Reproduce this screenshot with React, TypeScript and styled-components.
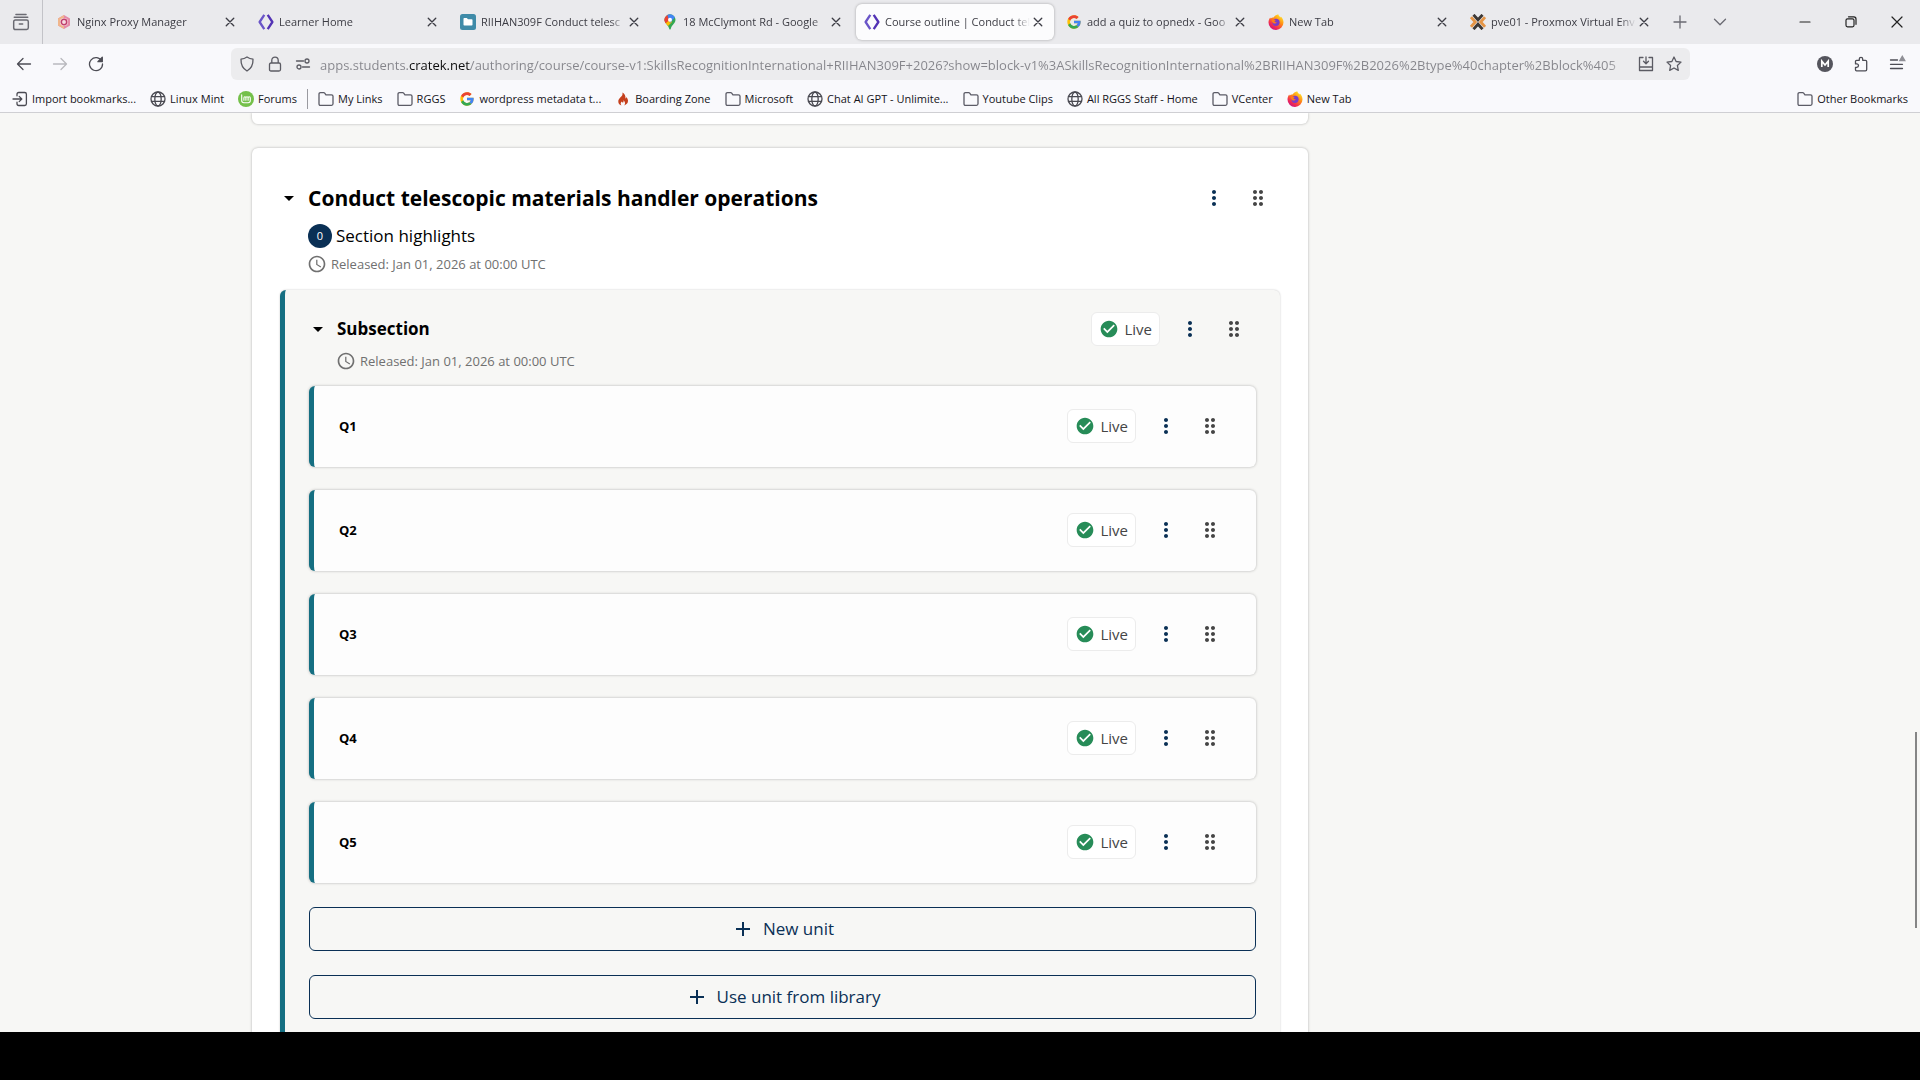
import React from "react";
import styled, { createGlobalStyle } from "styled-components";
import {
  MdArrowDropDown,
  MdMoreVert,
  MdDragIndicator,
  MdCheckCircle,
  MdAccessTime,
  MdAdd,
} from "react-icons/md";

const GlobalStyle = createGlobalStyle`
  *, *::before, *::after { box-sizing: border-box; }
  html, body { margin: 0; padding: 0; }
  body {
    font-family: "Open Sans", "Noto Sans", sans-serif;
    background: #000;
    color: #000;
  }
  button, input { font: inherit; color: inherit; }
  h2, h3, h4, p, ul { margin: 0; padding: 0; }
  ul { list-style: none; }
`;

const navy = "#0a3055";
const teal = "#156f82";

/* ---------- window ---------- */

const Window = styled.div`
  display: flex;
  flex-direction: column;
  height: 100vh;
  padding-bottom: 48px;
  overflow: hidden;
`;

const PlainButton = styled.button`
  display: inline-flex;
  align-items: center;
  justify-content: center;
  flex: none;
  padding: 0;
  border: 0;
  background: none;
  cursor: pointer;
`;

/* ---------- tab strip ---------- */

const TabStrip = styled.header`
  display: flex;
  align-items: center;
  flex: none;
  height: 44px;
  background: #eaeaed;
`;

const ViewButton = styled(PlainButton)`
  width: 43px;
  height: 44px;
  border-right: 1px solid #c3c3c8;
  color: #6a6a72;
`;

const Tabs = styled.div`
  display: flex;
  gap: 4px;
  flex: 0 1 1617px;
  min-width: 0;
  padding-left: 5px;
`;

const TabItem = styled.div<{ $active?: boolean }>`
  display: flex;
  align-items: center;
  flex: 1 1 0;
  min-width: 0;
  height: 36px;
  padding: 0 8px;
  border-radius: 6px;
  background: ${(p) => (p.$active ? "#fcfcfd" : "transparent")};
  box-shadow: ${(p) => (p.$active ? "0 0 3px rgba(0, 0, 0, 0.3)" : "none")};
`;

const TabLabel = styled.button`
  display: flex;
  align-items: center;
  gap: 5px;
  flex: 1;
  min-width: 0;
  padding: 0;
  border: 0;
  background: none;
  font-size: 11px;
  line-height: 16px;
  color: #3c3c44;
  text-align: left;
  cursor: pointer;

  svg { flex: none; }
`;

const TabTitle = styled.span`
  flex: 1;
  overflow: hidden;
  white-space: nowrap;
  mask-image: linear-gradient(to left, transparent, #000 16px);
`;

const TabClose = styled(PlainButton)`
  width: 16px;
  height: 24px;
  color: #3c3c44;
`;

const StripButton = styled(PlainButton)`
  width: 40px;
  height: 36px;
  color: #6a6a72;
`;

const WindowControls = styled.div`
  display: flex;
  margin-left: auto;
`;

const WindowButton = styled(PlainButton)`
  width: 46px;
  height: 36px;
  color: #222;
`;

/* ---------- navigation ---------- */

const NavBar = styled.nav`
  display: flex;
  align-items: center;
  flex: none;
  height: 40px;
  padding: 0 5px 0 6px;
  background: #f9f9fc;
`;

const NavButton = styled(PlainButton)<{ $muted?: boolean }>`
  width: 36px;
  height: 36px;
  color: ${(p) => (p.$muted ? "#b9b9be" : "#4d4d55")};
`;

const AddressBar = styled.form`
  display: flex;
  align-items: center;
  flex: 1;
  min-width: 0;
  height: 32px;
  margin: 0 117px;
  padding: 0 2px;
  border-radius: 6px;
  background: #ececee;
`;

const AddressButton = styled(PlainButton)`
  width: 28px;
  height: 28px;
  color: #5b5b63;
`;

const AddressInput = styled.input`
  flex: 1;
  min-width: 0;
  height: 28px;
  padding: 2px 0 0 3px;
  border: 0;
  outline: 0;
  font-size: 13px;
  color: transparent;
  background-image: linear-gradient(
    to right,
    #85858b 0,
    #85858b 92px,
    #0c0c0d 92px,
    #0c0c0d 153px,
    #85858b 153px,
    #85858b calc(100% - 24px),
    transparent 100%
  );
  background-clip: text;
  -webkit-background-clip: text;
`;

/* ---------- bookmarks ---------- */

const BookmarkBar = styled.div`
  display: flex;
  align-items: center;
  flex: none;
  gap: 14px;
  height: 29px;
  padding: 1px 12px 0;
  border-bottom: 1px solid #cfcfd3;
  background: #f9f9fc;
`;

const Bookmark = styled.a<{ $end?: boolean }>`
  display: flex;
  align-items: center;
  gap: 4px;
  flex: none;
  margin-left: ${(p) => (p.$end ? "auto" : "0")};
  font-size: 11px;
  line-height: 16px;
  color: #15141a;
  text-decoration: none;
  white-space: nowrap;
`;

const BookmarkDivider = styled.span`
  width: 1px;
  height: 20px;
  margin: 0 -4px;
  background: #9a9aa0;
`;

/* ---------- page ---------- */

const Viewport = styled.div`
  position: relative;
  flex: 1;
  min-height: 0;
  overflow: hidden;
  background: #f7f7f5;
`;

const Outline = styled.main`
  display: flex;
  flex-direction: column;
  gap: 24px;
  max-width: 1308px;
  padding-left: 252px;
`;

const Scrollbar = styled.div`
  position: absolute;
  top: 619px;
  right: 3px;
  width: 2px;
  height: 196px;
  background: #858585;
`;

const cardShadow = "0 0 3px rgba(0, 0, 0, 0.28)";

const PreviousSection = styled.section`
  height: 11px;
  border-radius: 0 0 6px 6px;
  background: #fff;
  box-shadow: ${cardShadow};
`;

const Section = styled.section`
  padding: 28px;
  border-radius: 6px;
  background: #fff;
  box-shadow: ${cardShadow};
`;

const Subsection = styled.section`
  margin-top: 16px;
  padding: 17px 24px 24px;
  border-left: 5px solid ${teal};
  border-radius: 6px;
  background: #f7f7f5;
  box-shadow: 0 0 2px rgba(0, 0, 0, 0.24);
`;

const HeaderRow = styled.div`
  display: flex;
  align-items: center;
  height: 44px;
`;

const ExpandButton = styled(PlainButton)<{ $size: "section" | "subsection" }>`
  gap: 7px;
  margin-left: -3px;
  font-size: ${(p) => (p.$size === "section" ? 21 : 17)}px;
  line-height: 28px;

  h2, h3 { font-size: inherit; font-weight: 700; }
`;

const Actions = styled.div`
  display: flex;
  align-items: center;
  margin-left: auto;
`;

const IconButton = styled(PlainButton)<{ $grip?: boolean }>`
  width: 44px;
  height: 44px;
  font-size: 24px;
  color: ${(p) => (p.$grip ? "#454545" : navy)};
`;

const StatusBadge = styled.span`
  display: flex;
  align-items: center;
  gap: 5px;
  height: 34px;
  margin-right: 8px;
  padding: 0 7px;
  border: 1px solid #ececec;
  border-radius: 6px;
  background: #fff;
  font-size: 15px;
  line-height: 24px;
  color: #454545;

  svg { font-size: 20px; color: #278c58; }
`;

const Highlights = styled(PlainButton)`
  display: flex;
  gap: 4px;
  height: 24px;
  margin: 4px 0 0 28px;
  font-size: 17px;
  line-height: 24px;
`;

const Count = styled.span`
  width: 24px;
  height: 24px;
  border-radius: 50%;
  background: ${navy};
  color: #fff;
  font-size: 11px;
  line-height: 24px;
  text-align: center;
`;

const Release = styled.p`
  display: flex;
  align-items: center;
  gap: 4px;
  height: 20px;
  margin-left: 27px;
  font-size: 13px;
  line-height: 20px;
  color: #707070;

  svg { font-size: 20px; }
`;

const SectionMeta = styled.div`
  display: grid;
  gap: 6px;
  justify-items: start;
`;

const UnitList = styled.ul`
  display: grid;
  gap: 23px;
  margin: 15px 0 24px;
`;

const Unit = styled.li`
  display: flex;
  align-items: center;
  height: 81px;
  padding: 0 24px 2px 25px;
  border-left: 5px solid ${teal};
  border-radius: 6px;
  background: #fdfdfd;
  box-shadow: ${cardShadow};
`;

const UnitTitle = styled.h4`
  font-size: 13px;
  font-weight: 700;
  line-height: 20px;
`;

const AddButtons = styled.div`
  display: grid;
  gap: 24px;
`;

const AddButton = styled(PlainButton)`
  gap: 8px;
  height: 44px;
  border: 1px solid ${navy};
  border-radius: 6px;
  font-size: 17px;
  line-height: 24px;
  color: ${navy};

  svg { font-size: 24px; }
`;

/* ---------- icons ---------- */

const Line = ({
  size = 16,
  children,
  width = 1.3,
}: {
  size?: number;
  width?: number;
  children: React.ReactNode;
}) => (
  <svg
    width={size}
    height={size}
    viewBox="0 0 16 16"
    fill="none"
    stroke="currentColor"
    strokeWidth={width}
    strokeLinecap="round"
    strokeLinejoin="round"
    aria-hidden="true"
  >
    {children}
  </svg>
);

const FolderIcon = () => (
  <Line>
    <path d="M1 12.8V3.2q0-1.5 1.5-1.5h3.2q.6 0 1 .5l1.2 1.6h5.6q1.5 0 1.5 1.5v7.5q0 1.5-1.5 1.5h-11Q1 14.3 1 12.8z" stroke="#5b5b66" />
  </Line>
);

const GlobeIcon = () => (
  <Line>
    <g stroke="#4a4a52">
      <circle cx="8" cy="8" r="7" />
      <ellipse cx="8" cy="8" rx="3.2" ry="7" />
      <path d="M1.5 5.6h13M1.5 10.4h13" />
    </g>
  </Line>
);

const ImportIcon = () => (
  <Line>
    <path d="M5 4.8V3.2q0-1.7 1.7-1.7h6q1.7 0 1.7 1.7v9.6q0 1.7-1.7 1.7h-6Q5 14.5 5 12.8v-1.6M1 8h8.5M7.2 5.4 9.8 8l-2.6 2.6" stroke="#4a4a52" />
  </Line>
);

const GoogleIcon = () => (
  <svg width="16" height="16" viewBox="0 0 48 48" aria-hidden="true">
    <path fill="#FFC107" d="M43.6 20H24v8h11.300C33.700 32.700 29.200 36 24 36c-6.600 0-12-5.400-12-12s5.400-12 12-12c3.100 0 5.800 1.200 7.900 3l5.700-5.700C34 6 29.300 4 24 4 13 4 4 13 4 24s9 20 20 20 20-9 20-20c0-1.300-.1-2.700-.4-4z" />
    <path fill="#EA4335" d="m6.300 14.700 6.600 4.800C14.700 15.100 19 12 24 12c3.100 0 5.800 1.200 7.900 3l5.700-5.700C34 6 29.300 4 24 4 16.300 4 9.700 8.300 6.300 14.700z" />
    <path fill="#34A853" d="M24 44c5.200 0 9.900-2 13.400-5.200l-6.200-5.200A12 12 0 0 1 12.700 28l-6.500 5C9.500 39.600 16.200 44 24 44z" />
    <path fill="#4285F4" d="M43.600 20H24v8h11.300a12 12 0 0 1-4.100 5.600l6.200 5.200C37 39.200 44 34 44 24c0-1.300-.1-2.700-.4-4z" />
  </svg>
);

const FirefoxIcon = () => (
  <svg width="16" height="16" viewBox="0 0 16 16" aria-hidden="true">
    <defs>
      <linearGradient id="fx" x1="0.85" y1="0.1" x2="0.25" y2="0.95">
        <stop offset="0" stopColor="#ffe226" />
        <stop offset="0.4" stopColor="#ff8a16" />
        <stop offset="0.75" stopColor="#f3304e" />
        <stop offset="1" stopColor="#d1127c" />
      </linearGradient>
    </defs>
    <path fill="url(#fx)" d="M10.200.3c.4 1.600 1.500 2.300 2.300 3.200.3-.2.3-.6.300-.9 1.700 1.500 2.700 3.700 2.700 6A7.500 7.500 0 0 1 .5 8.400c0-2 .8-3.800 1.700-5 .1.500.3.800.5 1.100C3.500 3.600 4.600 3.300 5.500 3.500c1.300-1.900 3.300-2.800 4.700-3.200z" />
    <circle cx="8" cy="8.300" r="3.600" fill="#7a3cc9" />
    <path fill="#ff7a1a" d="M3.600 5.600c1.700-1 3.200-.2 4.400.9-.9 0-1.500.4-1.400 1 .2.700 1.200.8 2 .5-.4 1.300-1.600 1.900-2.800 1.500C4.300 9 3.500 7.500 3.600 5.600z" />
  </svg>
);

const MintIcon = () => (
  <svg width="16" height="16" viewBox="0 0 16 16" aria-hidden="true">
    <circle cx="8" cy="8" r="8" fill="#74c04a" />
    <path d="M3.700 3.800v5.700q0 2.200 2.200 2.200h4.200q2.200 0 2.200-2.200V7q0-1.300-1.100-1.300T10.100 7v2.200M10.100 9.200V7q0-1.300-1.100-1.300T7.900 7v2.200M7.900 7q0-1.300-1-1.300T5.900 7v2.200" fill="none" stroke="#fff" strokeWidth="1.100" strokeLinecap="round" />
  </svg>
);

const FlameIcon = () => (
  <svg width="16" height="16" viewBox="0 0 16 16" aria-hidden="true">
    <path fill="#c5401d" d="M7.400 1.500c.6 2.200-.5 3.300-1.700 4.600-1.500 1.600-2.900 3.200-2.300 5.300.5 1.700 1.700 2.600 3 3-1-1.300-.9-2.600.3-3.800.2.800.7 1.100 1.200 1 .9-.3.700-1.400.4-2.400 1.700 1.300 2.500 3.500.9 5.200 2.500-.6 4-2.500 3.800-4.800-.1-1.500-1-2.600-1.700-3.500 0 .8-.3 1.300-.9 1.500.5-2.600-.8-5-3-6.100z" />
  </svg>
);

const BracketsIcon = () => (
  <svg width="16" height="16" viewBox="0 0 16 16" fill="none" strokeWidth="2.300" strokeLinejoin="round" aria-hidden="true">
    <path d="M6.300.8 1.600 8l4.700 7.200" stroke="#6a55c8" />
    <path d="m9.700.8 4.700 7.200-4.700 7.200" stroke="#5333b5" />
  </svg>
);

const NginxIcon = () => (
  <svg width="16" height="16" viewBox="0 0 16 16" aria-hidden="true">
    <path d="M8 1 14 4.500v7L8 15l-6-3.500v-7z" fill="#e58aa8" />
    <path d="M8 1v14l-6-3.500v-7z" fill="#f0b68c" />
    <circle cx="8" cy="8" r="4" fill="#f7dbe2" />
    <circle cx="8" cy="8" r="2.700" fill="none" stroke="#c0406e" strokeWidth="1.500" />
  </svg>
);

const FolderTileIcon = () => (
  <svg width="16" height="16" viewBox="0 0 16 16" aria-hidden="true">
    <rect width="16" height="16" rx="2.500" fill="#3f8ba8" />
    <path fill="#fff" d="M3.500 4.800q0-.8.8-.8h2.500l1.200 1.300h3.700q.8 0 .8.800v4.700q0 .8-.8.800H4.300q-.8 0-.8-.8z" />
  </svg>
);

const MapPinIcon = () => (
  <svg width="16" height="16" viewBox="0 0 16 16" aria-hidden="true">
    <defs>
      <clipPath id="pin">
        <path d="M8 .3a5.500 5.500 0 0 1 5.500 5.500c0 3.700-4 5.200-4.700 9-.2 1.100-1.400 1.100-1.600 0-.7-3.800-4.700-5.300-4.700-9A5.500 5.500 0 0 1 8 .3z" />
      </clipPath>
    </defs>
    <g clipPath="url(#pin)">
      <path fill="#34a853" d="M0 0h16v16H0z" />
      <path fill="#fbbc04" d="m0 10 7-6 3 4-6 6z" />
      <path fill="#ea4335" d="M0 0h6l3 4-6 6H0z" />
      <path fill="#4285f4" d="M5 0h11L8 9z" />
      <path fill="#ea4335" d="M2 2.500 7.500 6 2.500 9.500 0 6z" />
    </g>
    <circle cx="8" cy="5.700" r="2" fill="#fff" />
  </svg>
);

const ProxmoxIcon = () => (
  <svg width="16" height="16" viewBox="0 0 16 16" fill="none" aria-hidden="true">
    <path d="M1 3.200 5.300 8 1 12.800M15 3.200 10.700 8l4.300 4.800" stroke="#e59546" strokeWidth="2.800" />
    <path d="m3.500.8 4.500 5 4.500-5M3.500 15.200l4.500-5 4.500 5" stroke="#3d3835" strokeWidth="2.800" />
  </svg>
);

/* ---------- content ---------- */

const tabs = [
  { title: "Nginx Proxy Manager", icon: <NginxIcon /> },
  { title: "Learner Home", icon: <BracketsIcon /> },
  { title: "RIIHAN309F Conduct telesc", icon: <FolderTileIcon /> },
  { title: "18 McClymont Rd - Google", icon: <MapPinIcon /> },
  { title: "Course outline | Conduct tel", icon: <BracketsIcon />, active: true },
  { title: "add a quiz to opnedx - Goo", icon: <GoogleIcon /> },
  { title: "New Tab", icon: <FirefoxIcon /> },
  { title: "pve01 - Proxmox Virtual Env", icon: <ProxmoxIcon /> },
];

const bookmarks = [
  { label: "My Links", icon: <FolderIcon /> },
  { label: "RGGS", icon: <FolderIcon /> },
  { label: "wordpress metadata t...", icon: <GoogleIcon /> },
  { label: "Boarding Zone", icon: <FlameIcon /> },
  { label: "Microsoft", icon: <FolderIcon /> },
  { label: "Chat AI GPT - Unlimite...", icon: <GlobeIcon /> },
  { label: "Youtube Clips", icon: <FolderIcon /> },
  { label: "All RGGS Staff - Home", icon: <GlobeIcon /> },
  { label: "VCenter", icon: <FolderIcon /> },
  { label: "New Tab", icon: <FirefoxIcon /> },
];

const units = ["Q1", "Q2", "Q3", "Q4", "Q5"];

const address =
  "apps.students.cratek.net/authoring/course/course-v1:SkillsRecognitionInternational+RIIHAN309F+2026?show=block-v1%3ASkillsRecognitionInternational%2BRIIHAN309F%2B2026%2Btype%40chapter%2Bblock%405";

const Live = () => (
  <StatusBadge>
    <MdCheckCircle />
    Live
  </StatusBadge>
);

const RowActions = ({ name, live }: { name: string; live?: boolean }) => (
  <Actions>
    {live && <Live />}
    <IconButton type="button" aria-label={`${name} menu`}>
      <MdMoreVert />
    </IconButton>
    <IconButton type="button" $grip aria-label={`Move ${name}`}>
      <MdDragIndicator />
    </IconButton>
  </Actions>
);

const Released = () => (
  <Release>
    <MdAccessTime />
    Released: Jan 01, 2026 at 00:00 UTC
  </Release>
);

const BrowserTabs = () => (
  <TabStrip>
    <ViewButton type="button" aria-label="Recent browsing">
      <Line size={18}>
        <path d="M3.500 1.300h9M2 3.800h12M3 6.300h10q1.500 0 1.500 1.500v5.400q0 1.500-1.500 1.500H3q-1.500 0-1.500-1.500V7.800Q1.500 6.300 3 6.300zM6.500 9.800h3" />
      </Line>
    </ViewButton>
    <Tabs role="tablist">
      {tabs.map((tab) => (
        <TabItem key={tab.title} $active={tab.active}>
          <TabLabel type="button" role="tab" aria-selected={Boolean(tab.active)}>
            {tab.icon}
            <TabTitle>{tab.title}</TabTitle>
          </TabLabel>
          <TabClose type="button" aria-label={`Close ${tab.title}`}>
            <Line size={12} width={1.8}><path d="m3 3 10 10M13 3 3 13" /></Line>
          </TabClose>
        </TabItem>
      ))}
    </Tabs>
    <StripButton type="button" aria-label="Open a new tab">
      <Line><path d="M8 2v12M2 8h12" /></Line>
    </StripButton>
    <StripButton type="button" aria-label="List all tabs">
      <Line><path d="m2.500 5.300 5.500 5.400 5.500-5.400" /></Line>
    </StripButton>
    <WindowControls>
      <WindowButton type="button" aria-label="Minimise">
        <Line width={1.200}><path d="M3 8h10" /></Line>
      </WindowButton>
      <WindowButton type="button" aria-label="Restore">
        <Line width={1.200}><path d="M4.500 4.800h5q1.500 0 1.500 1.500v5q0 1.500-1.500 1.500h-5Q3 12.800 3 11.300v-5q0-1.500 1.500-1.500zM5.500 2.800h5.300q2.200 0 2.200 2.200v5.300" /></Line>
      </WindowButton>
      <WindowButton type="button" aria-label="Close window">
        <Line width={1.200}><path d="m3 3 10 10M13 3 3 13" /></Line>
      </WindowButton>
    </WindowControls>
  </TabStrip>
);

const Navigation = () => (
  <NavBar>
    <NavButton type="button" aria-label="Back">
      <Line><path d="M14.500 8H1.800M7 2.500 1.500 8 7 13.500" /></Line>
    </NavButton>
    <NavButton type="button" $muted aria-label="Forward">
      <Line><path d="M1.500 8h12.700M9 2.500 14.500 8 9 13.500" /></Line>
    </NavButton>
    <NavButton type="button" aria-label="Reload">
      <Line>
        <path d="M13.800 5.200A6.500 6.500 0 1 0 14.500 8" />
        <path d="M14.300 1.300v4.400H9.900z" fill="currentColor" />
      </Line>
    </NavButton>
    <AddressBar onSubmit={(e) => e.preventDefault()}>
      <AddressButton type="button" aria-label="Tracking protection">
        <Line><path d="M8 1q2.700 1.900 6 2.200.3 8-6 11.800Q1.700 11.200 2 3.200 5.300 2.900 8 1z" /></Line>
      </AddressButton>
      <AddressButton type="button" aria-label="Site security">
        <Line><path d="M4 7h8q1.500 0 1.500 1.500v5Q13.500 15 12 15H4q-1.500 0-1.500-1.500v-5Q2.500 7 4 7zM4.800 7V4.300a3.200 3.200 0 0 1 6.400 0V7" /></Line>
      </AddressButton>
      <AddressButton type="button" aria-label="Site permissions">
        <Line><path d="M1.500 5h7" /><circle cx="12" cy="5" r="2" /><path d="M7.500 11h7" /><circle cx="4" cy="11" r="2" /></Line>
      </AddressButton>
      <AddressInput aria-label="Address" defaultValue={address} spellCheck={false} />
      <AddressButton type="button" aria-label="Install site">
        <Line><path d="M5 1.500H1.500v9.500h13V1.500H11M1.500 11v3.500h13V11M8 1v6.500M5.500 5.300 8 7.800l2.500-2.500" /></Line>
      </AddressButton>
      <AddressButton type="button" aria-label="Bookmark this page">
        <Line><path d="m8 1 2.100 4.500 4.900.6-3.600 3.400.9 4.900L8 12l-4.300 2.400.9-4.900L1 6.100l4.900-.6z" /></Line>
      </AddressButton>
    </AddressBar>
    <NavButton type="button" aria-label="Account">
      <svg width="16" height="16" viewBox="0 0 16 16" aria-hidden="true">
        <circle cx="8" cy="8" r="8" fill="#55555d" />
        <path d="M4.800 11V5.200L8 9l3.200-3.800V11" fill="none" stroke="#fff" strokeWidth="1.700" />
      </svg>
    </NavButton>
    <NavButton type="button" aria-label="Extensions">
      <Line><path d="M2.500 5.300q0-1 1-1h2.800V3a1.700 1.700 0 0 1 3.400 0v1.300h2.800q1.200 0 1.200 1.200v8q0 1.300-1.300 1.300H3.500q-1 0-1-1v-2.500h1.300a1.700 1.700 0 0 0 0-3.400H2.500z" /></Line>
    </NavButton>
    <NavButton type="button" aria-label="Application menu">
      <svg width="18" height="18" viewBox="0 0 18 18" fill="none" stroke="currentColor" strokeWidth="1.300" strokeLinecap="round" aria-hidden="true">
        <path d="M2.500 5h7M2.500 9.300h12M2.500 13.500h12" />
        <path d="m14.300 1.300 2.500 4.400h-5z" fill="#8f8f96" stroke="#8f8f96" />
      </svg>
    </NavButton>
  </NavBar>
);

const Bookmarks = () => (
  <BookmarkBar>
    <Bookmark href="#import"><ImportIcon />Import bookmarks...</Bookmark>
    <Bookmark href="#mint"><GlobeIcon />Linux Mint</Bookmark>
    <Bookmark href="#forums"><MintIcon />Forums</Bookmark>
    <BookmarkDivider />
    {bookmarks.map((b) => (
      <Bookmark key={b.label} href="#bookmark">{b.icon}{b.label}</Bookmark>
    ))}
    <Bookmark href="#other" $end><FolderIcon />Other Bookmarks</Bookmark>
  </BookmarkBar>
);

export default function App() {
  return (
    <Window>
      <GlobalStyle />
      <BrowserTabs />
      <Navigation />
      <Bookmarks />
      <Viewport>
        <Outline>
          <PreviousSection aria-hidden="true" />
          <Section>
            <HeaderRow>
              <ExpandButton type="button" $size="section" aria-expanded="true">
                <MdArrowDropDown size={24} />
                <h2>Conduct telescopic materials handler operations</h2>
              </ExpandButton>
              <RowActions name="section" />
            </HeaderRow>
            <SectionMeta>
              <Highlights type="button">
                <Count>0</Count>
                Section highlights
              </Highlights>
              <Released />
            </SectionMeta>
            <Subsection>
              <HeaderRow>
                <ExpandButton type="button" $size="subsection" aria-expanded="true">
                  <MdArrowDropDown size={24} />
                  <h3>Subsection</h3>
                </ExpandButton>
                <RowActions name="subsection" live />
              </HeaderRow>
              <Released />
              <UnitList>
                {units.map((unit) => (
                  <Unit key={unit}>
                    <UnitTitle>{unit}</UnitTitle>
                    <RowActions name={unit} live />
                  </Unit>
                ))}
              </UnitList>
              <AddButtons>
                <AddButton type="button"><MdAdd />New unit</AddButton>
                <AddButton type="button"><MdAdd />Use unit from library</AddButton>
              </AddButtons>
            </Subsection>
          </Section>
        </Outline>
        <Scrollbar />
      </Viewport>
    </Window>
  );
}
